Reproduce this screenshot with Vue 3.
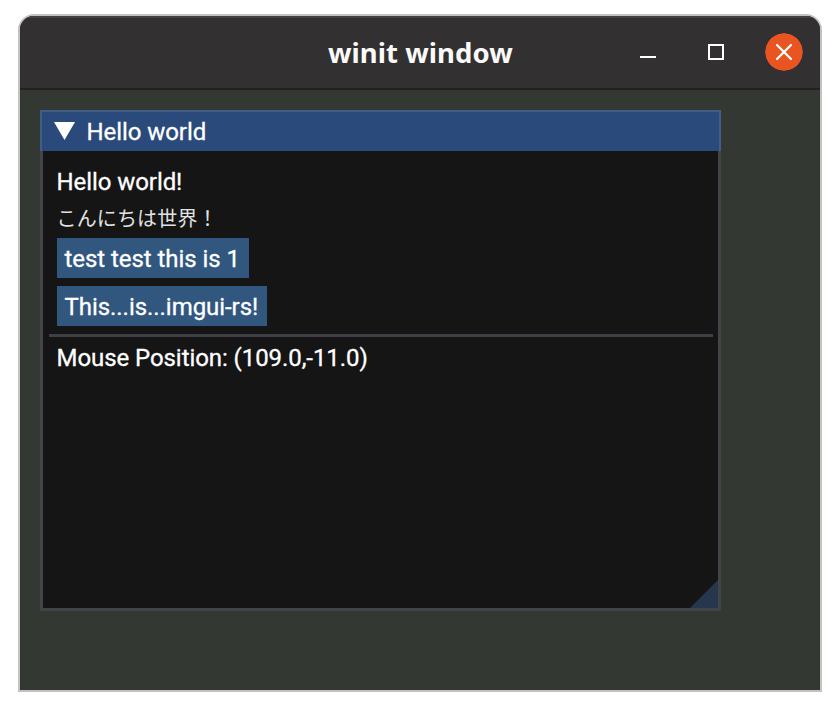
<script setup>
const heading = 'Hello world'
const buttons = ['test test this is 1', 'This...is...imgui-rs!']
const mouse = '(109.0,-11.0)'
</script>

<template>
  <main class="page">
    <section class="window">
      <header class="titlebar">
        <h1 class="title">winit window</h1>
        <div class="controls">
          <svg class="icon" viewBox="0 0 16 16"><path d="M0 13h16" /></svg>
          <svg class="icon" viewBox="0 0 16 16"><path d="M1 1h14v14H1z" /></svg>
          <span class="close">
            <svg class="icon round" viewBox="0 0 16 16"><path d="M1 1l14 14M15 1L1 15" /></svg>
          </span>
        </div>
      </header>
      <div class="canvas">
        <div class="panel">
          <div class="panel-head">
            <svg class="arrow" viewBox="0 0 21 18"><path d="M0 0h21L10.500 18z" /></svg>
            <span class="head-text">{{ heading }}</span>
          </div>
          <div class="panel-body">
            <p class="line">Hello world!</p>
            <p class="japanese" lang="ja">こんにちは世界！</p>
            <button v-for="(b, i) in buttons" :key="b" class="button" :class="'b' + i">{{ b }}</button>
            <div class="separator"></div>
            <p class="mouse">Mouse Position: {{ mouse }}</p>
          </div>
          <svg class="grip" viewBox="0 0 28 28"><path d="M28 0v28H0z" /></svg>
        </div>
      </div>
    </section>
  </main>
</template>

<style>
body { margin: 0; background: #fff; }
</style>

<style scoped>
.page {
  box-sizing: border-box;
  width: 840px;
  height: 710px;
  padding: 14px 18px 18px;
  background: #fff;
  overflow: hidden;
}
.window {
  box-sizing: border-box;
  width: 804px;
  height: 678px;
  border: 2px solid #c2c2c1;
  border-radius: 16px 16px 0 0;
  background: #343832;
  overflow: hidden;
}
.titlebar {
  box-sizing: border-box;
  height: 74px;
  display: grid;
  grid-template-columns: 1fr auto;
  align-items: center;
  padding: 0 17px 0 308px;
  background: #333031;
  border-top: 2px solid #434142;
  border-bottom: 2px solid #222121;
}
.title {
  margin: 0;
  color: #fafafa;
  font: 700 27.5px/40px "Noto Sans", sans-serif;
  letter-spacing: 0.05px;
  white-space: nowrap;
}
.controls { display: flex; align-items: center; margin-bottom: 2px; }
.icon {
  width: 16px;
  height: 16px;
  margin-right: 52px;
  fill: none;
  stroke: #fff;
  stroke-width: 2;
}
.controls > .icon + .icon { margin-right: 41px; }
.close {
  width: 38px;
  height: 38px;
  display: grid;
  place-items: center;
  border-radius: 50%;
  background: radial-gradient(circle, #e95420 18.4px, transparent 19px);
}
.controls .round { margin: 0; stroke-linecap: round; stroke-width: 2.3; }
.canvas { padding: 20px; }
.panel {
  position: relative;
  box-sizing: border-box;
  width: 681px;
  height: 501px;
  background: #151515;
  border: 3px solid #42444a;
  font-family: Roboto, sans-serif;
  color: #fff;
}
.panel-head {
  box-sizing: border-box;
  height: 41px;
  margin: -3px -3px 0;
  display: flex;
  align-items: center;
  padding-left: 12px;
  background: #294a7a;
  border: solid #435d87;
  border-width: 2px 2px 0;
}
.arrow { width: 21px; height: 18px; margin-bottom: 2px; fill: #fff; }
.head-text { margin-left: 11.5px; font-size: 24px; line-height: 28px; letter-spacing: -0.07px; -webkit-text-stroke: 0.3px; }
.panel-body {
  display: flex;
  flex-direction: column;
  align-items: flex-start;
  padding: 17px 5px 0 13.500px;
}
.line, .mouse { margin: 0; font-size: 24px; line-height: 28px; letter-spacing: -0.07px; white-space: nowrap; -webkit-text-stroke: 0.3px; }
.japanese {
  margin: 10px 0 0;
  height: 24px;
  font: 400 20px/24px "Noto Sans CJK JP", sans-serif;
  letter-spacing: 0.15px;
  color: #e2e2e2;
  white-space: nowrap;
}
.button {
  box-sizing: border-box;
  height: 40px;
  margin: 8.300px 0 0 0;
  padding: 2px 8px 0;
  border: 0;
  background: #32577f;
  color: #fff;
  font: 24px/38px Roboto, sans-serif;
  letter-spacing: -0.05px;
  text-align: left;
  white-space: nowrap;
  -webkit-text-stroke: 0.3px;
}
.b0 { width: 192px; }
.b1 { width: 210px; margin-top: 8px; }
.separator {
  align-self: stretch;
  height: 3px;
  margin: 7.700px 0 0 -7.5px;
  background: #3e3e44;
}
.mouse { margin-top: 7px; }
.grip { position: absolute; right: 0; bottom: 0; width: 28px; height: 28px; fill: #26374d; }
</style>
